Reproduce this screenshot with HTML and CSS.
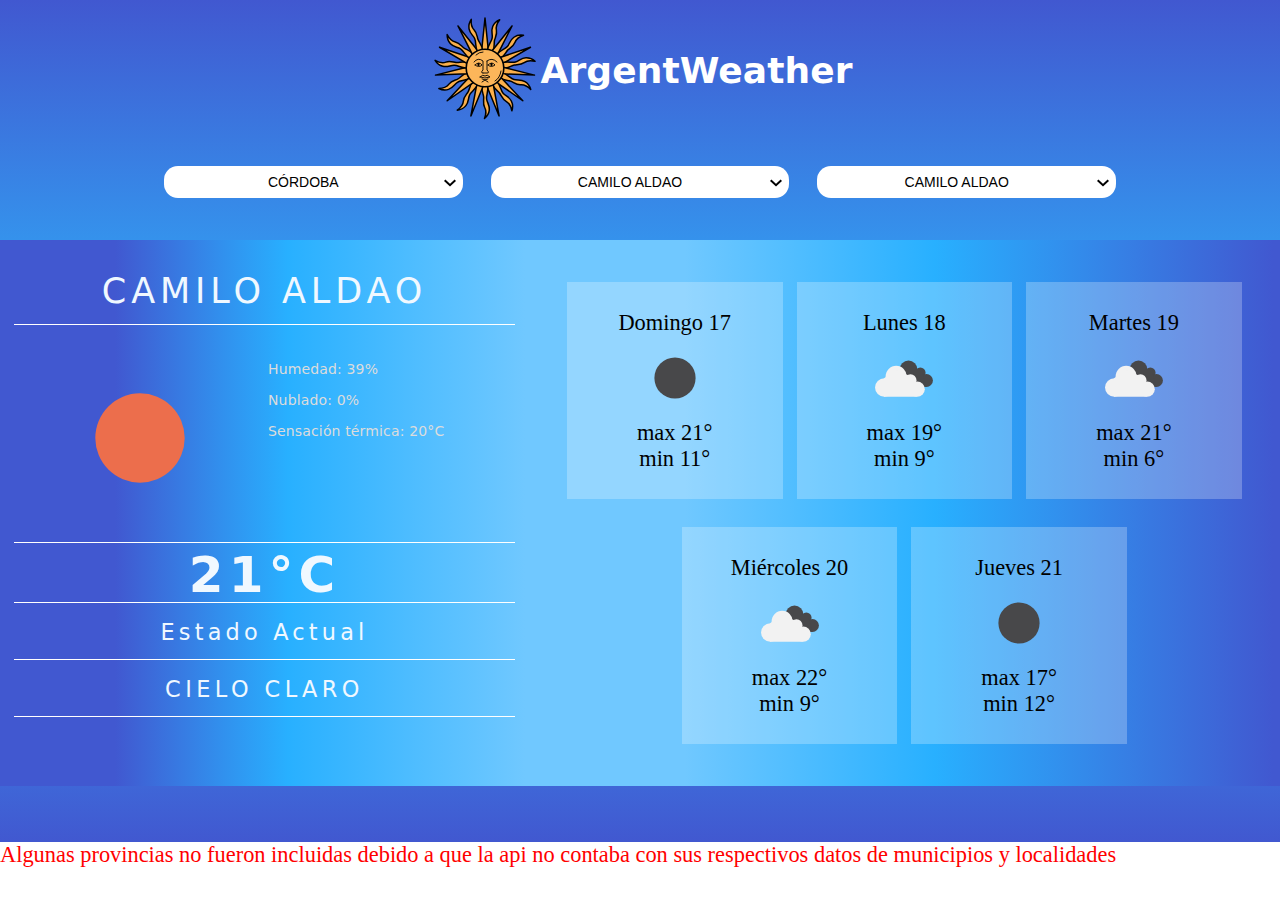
FILE: index.html
```html
<!DOCTYPE html>
<html lang="es">
<head>
<meta charset="utf-8">
<title>ArgentWeather</title>
<link rel="stylesheet" href="styles.css">
</head>
<body>
<svg class="defs" aria-hidden="true">
  <symbol id="clouds" viewBox="0 0 60 38">
    <g fill="#48484a"><circle cx="34.500" cy="9.500" r="8.900"/><circle cx="46.300" cy="12.800" r="5.300"/><circle cx="52.500" cy="20.500" r="6.400"/><path d="M28 10h20l4 16.900H36z"/></g>
    <g fill="#f2f2f2"><circle cx="10.300" cy="27.500" r="9.300"/><circle cx="22.200" cy="16.400" r="10.600"/><circle cx="36.500" cy="20.200" r="6"/><circle cx="43.200" cy="29.200" r="7.600"/><path d="M10 18.300L22 10l14 6 7 20.800H10z"/></g>
  </symbol>
  <symbol id="disc" viewBox="0 0 42 42"><circle cx="21" cy="21" r="20.600" fill="#48484a"/></symbol>
</svg>
<div class="page">
  <header class="header">
    <div class="brand">
      <svg class="sun" viewBox="-52 -52 104 104">
        <defs>
          <path id="ray" d="M-3.300-18L0-50L3.300-18z"/>
          <path id="wave" d="M-2.600-18C-3.800-23-1-27-1.600-31S-4.800-37-4.300-42Q-3.800-47 .5-50.500C-1.500-45.500-1.600-43 .3-39.500S1.300-33 1.300-29.500S4-23 2.600-18z"/>
        </defs>
        <g id="rays" fill="#fcb04b" stroke="#000" stroke-width="1.500" stroke-linejoin="round"></g>
        <circle r="18.800" fill="#fcb65a" stroke="#000" stroke-width="1.600"/>
        <g fill="none" stroke="#000" stroke-width=".9" stroke-linecap="round">
          <path d="M-9-13Q-6-16-2-16M-11-6Q-7-11-2-7V2Q-5 5-2 5M2-7Q7-11 12-6M2-7V2Q5 5 2 5H-2M-10-3Q-6-7-3-3Q-6 0-10-3M3-3Q7-7 10-3Q6 0 3-3M-5 9Q-2 6 0 8Q2 6 5 9Q0 11-5 9M-3 11Q0 13 3 11M-3 14L0 12L3 14M16 3Q15 10 10 13"/>
          <path d="M-6.500-4v1M6.500-4v1" stroke-width="2"/>
        </g>
      </svg>
      <h1 class="brand-name">ArgentWeather</h1>
    </div>
    <div class="filters">
      <div class="select">CÓRDOBA<svg class="arrow" viewBox="0 0 12 8"><path d="M.7 1.200l5.300 5 5.300-5"/></svg></div>
      <div class="select">CAMILO ALDAO<svg class="arrow" viewBox="0 0 12 8"><path d="M.7 1.200l5.300 5 5.300-5"/></svg></div>
      <div class="select">CAMILO ALDAO<svg class="arrow" viewBox="0 0 12 8"><path d="M.7 1.200l5.300 5 5.300-5"/></svg></div>
    </div>
  </header>
  <main class="main">
    <section class="current">
      <h2 class="city"><span>CAMILO ALDAO</span></h2>
      <div class="conditions">
        <svg class="current-icon" viewBox="0 0 90 90"><circle cx="45" cy="45" r="44.700" fill="#ec6e4c"/></svg>
        <div class="details"><p>Humedad: 39%</p><p>Nublado: 0%</p><p>Sensación térmica: 20°C</p></div>
      </div>
      <div class="temp"><span>21°C</span></div>
      <div class="row state"><span>Estado Actual</span></div>
      <div class="row sky"><span>CIELO CLARO</span></div>
    </section>
    <section class="days">
      <article class="card"><p>Domingo 17</p><svg class="icon-disc"><use href="#disc"/></svg><p>max 21°</p><p>min 11°</p></article>
      <article class="card"><p>Lunes 18</p><svg class="icon-cloud"><use href="#clouds"/></svg><p>max 19°</p><p>min 9°</p></article>
      <article class="card"><p>Martes 19</p><svg class="icon-cloud"><use href="#clouds"/></svg><p>max 21°</p><p>min 6°</p></article>
      <article class="card"><p>Miércoles 20</p><svg class="icon-cloud"><use href="#clouds"/></svg><p>max 22°</p><p>min 9°</p></article>
      <article class="card"><p>Jueves 21</p><svg class="icon-disc"><use href="#disc"/></svg><p>max 17°</p><p>min 12°</p></article>
    </section>
  </main>
  <footer class="footer"></footer>
</div>
<p class="note">Algunas provincias no fueron incluidas debido a que la api no contaba con sus respectivos datos de municipios y localidades</p>
<script src="sun.js"></script>
</body>
</html>
```
FILE: styles.css
```css
* { box-sizing: border-box; }
body { margin: 0; background: #fff; font: 22.4px/26px "Times New Roman", "Liberation Serif", serif; }
p, h1, h2 { margin: 0; }
.defs { display: none; }
.header { height: 240px; background: linear-gradient(#4158d0, #3592ec); }
.brand { display: flex; justify-content: center; align-items: center; height: 138px; gap: 4px; padding-left: 5px; }
.sun { width: 104px; height: 104px; margin-top: -2px; flex: none; }
.brand-name { width: 312px; padding-top: 3px; white-space: nowrap; color: #fff; font: bold 36px/44px Verdana, "DejaVu Sans", sans-serif; letter-spacing: .1px; }
.filters { display: grid; grid-template-columns: repeat(3, 1fr); gap: 28px; width: 952px; margin: 28px auto 0; }
.select { display: flex; align-items: center; justify-content: center; position: relative; height: 32px; padding-right: 20px; border-radius: 14px; background: #fff; color: #000; font: 14px Arial, "Liberation Sans", sans-serif; }
.arrow { position: absolute; right: 7px; top: 13px; width: 12px; height: 8px; fill: none; stroke: #000; stroke-width: 2; }
.main { display: flex; height: 546px; background: linear-gradient(90deg, #4158d0 9%, #3191ee 17.500%, #28b0ff 22.500%, #70c8ff 41%, #70c8ff 53.500%, #28b0ff 73%, #3191ee 82.500%, #4158d0 99.500%); }
.current { width: 501px; margin-left: 14px; padding-top: 17px; color: aliceblue; text-align: center; font-family: Verdana, "DejaVu Sans", sans-serif; }
.city { height: 68px; border-bottom: 1px solid #fff; font-size: 35px; font-weight: 400; line-height: 68px; letter-spacing: 4.900px; }
.conditions { display: flex; height: 217px; }
.current-icon { width: 90px; height: 90px; margin: 68px 0 0 81px; flex: none; }
.details { margin: 29px 0 0 83px; color: #dcdcdc; font-size: 14px; line-height: 31px; letter-spacing: .150px; text-align: left; white-space: nowrap; }
.temp { height: 61px; border-top: 1px solid #fff; border-bottom: 1px solid #fff; font-size: 50px; font-weight: 700; line-height: 65px; letter-spacing: 5px; }
.row { height: 57px; border-bottom: 1px solid #fff; font-size: 22.400px; line-height: 59px; }
.state { letter-spacing: 4.200px; }
.sky { letter-spacing: 4.450px; }
.days { display: flex; flex-wrap: wrap; justify-content: center; align-content: flex-start; gap: 28px 14px; width: 675px; margin: 42px 0 0 51.800px; }
.card { display: flex; flex-direction: column; align-items: center; width: 215.600px; height: 217px; padding-top: 28px; background: rgba(255, 255, 255, .25); }
.icon-disc { width: 42px; height: 42px; margin: 21px 0 21px; flex: none; }
.icon-cloud { width: 60px; height: 38px; margin: 24px 0 22px; flex: none; }
.footer { height: 56px; background: linear-gradient(#3f66d7, #4158d0); }
.note { color: red; white-space: nowrap; }
```
FILE: sun.js
```js
const rays = document.getElementById('rays');
for (let i = 0; i < 22; i++) {
  const ray = document.createElementNS('http://www.w3.org/2000/svg', 'use');
  ray.setAttribute('href', i % 2 ? '#wave' : '#ray');
  ray.setAttribute('transform', `rotate(${i * 360 / 22})`);
  rays.append(ray);
}
```
